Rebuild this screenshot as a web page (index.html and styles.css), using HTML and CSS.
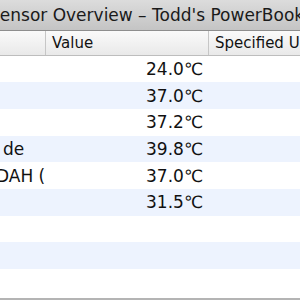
FILE: index.html
```html
<!DOCTYPE html>
<html lang="en">
<head>
    <meta charset="UTF-8">
    <title>Sensor Overview</title>
    <link rel="stylesheet" href="styles.css">
</head>
<body>
    <div class="window">
        <div class="titlebar">
            <span class="title">Sensor Overview – Todd's PowerBook G4</span>
        </div>

        <!-- column headers -->
        <div class="row head">
            <div class="cell"></div>
            <div class="cell">Value</div>
            <div class="cell">Specified Upper Limit</div>
        </div>

        <div class="rows">
            <div class="row"><div class="cell name"></div><div class="cell value">24.0℃</div><div class="cell"></div></div>
            <div class="row"><div class="cell name"></div><div class="cell value">37.0℃</div><div class="cell"></div></div>
            <div class="row"><div class="cell name"></div><div class="cell value">37.2℃</div><div class="cell"></div></div>
            <div class="row"><div class="cell name"><span class="cut-de">de</span></div><div class="cell value">39.8℃</div><div class="cell"></div></div>
            <div class="row"><div class="cell name"><span class="cut-d">DAH (</span></div><div class="cell value">37.0℃</div><div class="cell"></div></div>
            <div class="row"><div class="cell name"></div><div class="cell value">31.5℃</div><div class="cell"></div></div>
            <div class="row"><div class="cell name"></div><div class="cell value"></div><div class="cell"></div></div>
            <div class="row"><div class="cell name"></div><div class="cell value"></div><div class="cell"></div></div>
            <div class="row"><div class="cell name"></div><div class="cell value"></div><div class="cell"></div></div>
        </div>
    </div>
</body>
</html>
```

FILE: styles.css
```css
body {
    margin: 0;
    font-family: 'DejaVu Sans', sans-serif;
    color: #111;
    background: #fff;
}

.window {
    width: 300px;
    height: 300px;
    overflow: hidden;
    display: flex;
    flex-direction: column;
}

.titlebar {
    height: 31px;
    flex-shrink: 0;
    display: flex;
    align-items: center;
    background: linear-gradient(#dcdcdc, #c4c4c4);
    border-bottom: 1px solid #8e8e8e;
    box-sizing: border-box;
    overflow: hidden;
}

.title {
    font-size: 17px;
    white-space: nowrap;
    margin-left: -11px;
    color: #1a1a1a;
}

.row {
    display: grid;
    grid-template-columns: 45px 163px 1fr;
    height: 26.7px;
    align-items: center;
    font-size: 17px;
}

.row.head {
    height: 24.5px;
    flex-shrink: 0;
    font-size: 15px;
    background: linear-gradient(#fafafa, #e9e9e9);
    border-bottom: 1px solid #bdbdbd;
    box-sizing: border-box;
    align-items: stretch;
}

.row.head .cell {
    display: flex;
    align-items: center;
    padding-left: 6px;
    padding-top: 1px;
    border-left: 1px solid #c6c6c6;
    white-space: nowrap;
    overflow: hidden;
}

.row.head .cell:first-child {
    border-left: none;
}

.rows {
    flex: 1;
    border-bottom: 2px solid #b4b4b4;
    overflow: hidden;
}

.rows .row:nth-child(even) {
    background: #edf3fe;
}

.cell {
    white-space: nowrap;
    overflow: hidden;
}

.value {
    text-align: right;
    padding-right: 5px;
}

.cut-de {
    padding-left: 3px;
}

.cut-d {
    display: inline-block;
    margin-left: -4px;
}
```
